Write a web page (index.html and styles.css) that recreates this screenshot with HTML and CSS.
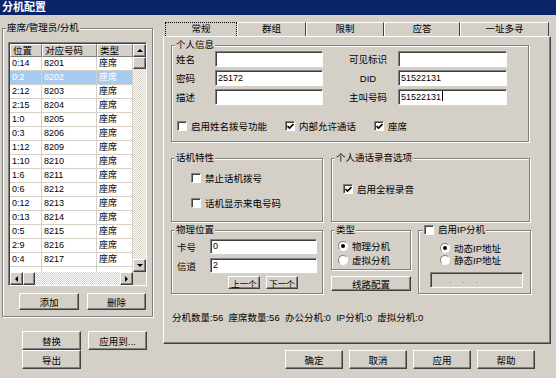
FILE: index.html
```html
<!DOCTYPE html>
<html>
  <head>
    <meta charset="utf-8">
    <link rel="stylesheet" href="styles.css">
    <title>分机配置</title>
  </head>
  <body>
    <div class="titlebar">分机配置</div>
    <div class="dialog">
      <div class="left-col">
        <div class="group seat-group">
          <span class="group-title">座席/管理员/分机</span>
          <div class="list">
            <div class="list-main">
              <div class="list-table">
                <div class="row head"><span>位置</span><span>对应号码</span><span>类型</span></div>
                <div class="row"><span>0:14</span><span>8201</span><span>座席</span></div>
                <div class="row selected"><span>0:2</span><span>8202</span><span>座席</span></div>
                <div class="row"><span>2:12</span><span>8203</span><span>座席</span></div>
                <div class="row"><span>2:15</span><span>8204</span><span>座席</span></div>
                <div class="row"><span>1:0</span><span>8205</span><span>座席</span></div>
                <div class="row"><span>0:3</span><span>8206</span><span>座席</span></div>
                <div class="row"><span>1:12</span><span>8209</span><span>座席</span></div>
                <div class="row"><span>1:10</span><span>8210</span><span>座席</span></div>
                <div class="row"><span>1:6</span><span>8211</span><span>座席</span></div>
                <div class="row"><span>0:6</span><span>8212</span><span>座席</span></div>
                <div class="row"><span>0:12</span><span>8213</span><span>座席</span></div>
                <div class="row"><span>0:13</span><span>8214</span><span>座席</span></div>
                <div class="row"><span>0:5</span><span>8215</span><span>座席</span></div>
                <div class="row"><span>2:9</span><span>8216</span><span>座席</span></div>
                <div class="row"><span>0:4</span><span>8217</span><span>座席</span></div>
                <div class="row"><span></span><span></span><span></span></div>
              </div>
              <div class="vscroll">
                <div class="sb-btn"><i class="arrow up"></i></div>
                <div class="sb-thumb"></div>
                <div class="sb-track"></div>
                <div class="sb-btn"><i class="arrow down"></i></div>
              </div>
            </div>
            <div class="hscroll">
              <div class="sb-btn"><i class="arrow left"></i></div>
              <div class="sb-thumb wide"></div>
              <div class="sb-track"></div>
              <div class="sb-btn"><i class="arrow right"></i></div>
              <div class="sb-corner"></div>
            </div>
          </div>
          <div class="seat-buttons">
            <button class="btn add-btn">添加</button>
            <button class="btn del-btn">删除</button>
          </div>
        </div>
        <div class="left-actions">
          <button class="btn">替换</button>
          <button class="btn">应用到...</button>
          <button class="btn">导出</button>
        </div>
      </div>

      <div class="right-col">
        <div class="tabs">
          <div class="tab active" style="width:72px">常规</div>
          <div class="tab" style="width:69px">群组</div>
          <div class="tab" style="width:78px">限制</div>
          <div class="tab" style="width:76px">应答</div>
          <div class="tab" style="width:89px">一址多寻</div>
        </div>
        <div class="panel">
          <div class="group info-group">
            <span class="group-title">个人信息</span>
            <div class="info-grid">
              <span>姓名</span><div class="field"></div>
              <span class="label-c">可见标识</span><div class="field"></div>
              <span>密码</span><div class="field">25172</div>
              <span class="label-c">DID</span><div class="field">51522131</div>
              <span>描述</span><div class="field"></div>
              <span class="label-c">主叫号码</span><div class="field">51522131<i class="caret"></i></div>
            </div>
            <div class="info-checks">
              <label class="check w1"><span class="check-box"></span>启用姓名拨号功能</label>
              <label class="check w2"><span class="check-box"><svg width="7" height="7" viewBox="0 0 7 7"><polyline points="0.5,3 2.5,5 6.5,1" fill="none" stroke="#000" stroke-width="1.6"/></svg></span>内部允许通话</label>
              <label class="check"><span class="check-box"><svg width="7" height="7" viewBox="0 0 7 7"><polyline points="0.5,3 2.5,5 6.5,1" fill="none" stroke="#000" stroke-width="1.6"/></svg></span>座席</label>
            </div>
          </div>

          <div class="row2">
            <div class="group phone-group">
              <span class="group-title">话机特性</span>
              <label class="check"><span class="check-box"></span>禁止话机拨号</label>
              <label class="check"><span class="check-box"></span>话机显示来电号码</label>
            </div>
            <div class="group rec-group">
              <span class="group-title">个人通话录音选项</span>
              <label class="check"><span class="check-box"><svg width="7" height="7" viewBox="0 0 7 7"><polyline points="0.5,3 2.5,5 6.5,1" fill="none" stroke="#000" stroke-width="1.6"/></svg></span>启用全程录音</label>
            </div>
          </div>

          <div class="row3">
            <div class="group pos-group">
              <span class="group-title">物理位置</span>
              <div class="pos-grid">
                <span>卡号</span><div class="field small">0</div>
                <span>信道</span><div class="field small">2</div>
              </div>
              <div class="pos-buttons">
                <button class="btn mini">上一个</button>
                <button class="btn mini">下一个</button>
              </div>
            </div>
            <div class="type-col">
              <div class="group type-group">
                <span class="group-title">类型</span>
                <label class="radio-item"><span class="radio on"></span>物理分机</label>
                <label class="radio-item"><span class="radio"></span>虚拟分机</label>
              </div>
              <button class="btn line-btn">线路配置</button>
            </div>
            <div class="group ip-group">
              <span class="group-title check-title"><span class="check-box"></span>启用IP分机</span>
              <label class="radio-item ip-radio"><span class="radio on"></span>动态IP地址</label>
              <label class="radio-item ip-radio"><span class="radio"></span>静态IP地址</label>
              <div class="ip-field">.&nbsp;&nbsp;&nbsp;&nbsp;.&nbsp;&nbsp;&nbsp;&nbsp;.</div>
            </div>
          </div>

          <div class="status">分机数量:56  座席数量:56  办公分机:0  IP分机:0  虚拟分机:0</div>
        </div>
        <div class="footer">
          <button class="btn foot-btn">确定</button>
          <button class="btn foot-btn">取消</button>
          <button class="btn foot-btn">应用</button>
          <button class="btn foot-btn">帮助</button>
        </div>
      </div>
    </div>
  </body>
</html>
```
FILE: styles.css
```css
body {
  margin: 0;
  width: 556px;
  height: 378px;
  overflow: hidden;
  background: #d4d0c8;
  font: 9.5px "Liberation Sans", "Noto Sans CJK SC", sans-serif;
  color: #000;
}

.titlebar {
  height: 15px;
  line-height: 15px;
  padding-left: 2px;
  background: #0a246a;
  color: #fff;
  font-weight: bold;
  font-size: 11px;
}

.dialog {
  display: flex;
  align-items: flex-start;
}

/* etched group box */
.group {
  position: relative;
  box-sizing: border-box;
  border: 1px solid #808080;
  box-shadow: inset 1px 1px 0 #fff, 1px 1px 0 #fff;
}

.group-title {
  position: absolute;
  top: -7px;
  left: 3px;
  padding: 0 1px;
  line-height: 12px;
  background: #d4d0c8;
  white-space: nowrap;
}

.btn {
  box-sizing: border-box;
  display: flex;
  align-items: center;
  justify-content: center;
  padding: 0;
  border: 1px solid;
  border-color: #fff #404040 #404040 #fff;
  box-shadow: inset -1px -1px 0 #808080;
  background: #d4d0c8;
  color: #000;
  font: inherit;
}

.field {
  box-sizing: border-box;
  height: 16px;
  padding: 0 2px;
  border: 1px solid;
  border-color: #808080 #fff #fff #808080;
  box-shadow: inset 1px 1px 0 #404040;
  background: #fff;
  font-size: 9px;
  line-height: 14px;
  white-space: nowrap;
}

.caret {
  display: inline-block;
  width: 1px;
  height: 10px;
  margin-left: 1px;
  vertical-align: -1px;
  background: #000;
}

.check {
  display: flex;
  align-items: center;
  gap: 4px;
  height: 10px;
  white-space: nowrap;
}

.check-box {
  box-sizing: border-box;
  flex: none;
  display: flex;
  align-items: center;
  justify-content: center;
  width: 10px;
  height: 10px;
  border: 1px solid;
  border-color: #808080 #fff #fff #808080;
  box-shadow: inset 1px 1px 0 #404040;
  background: #fff;
}

.radio-item {
  display: flex;
  align-items: center;
  gap: 4px;
  white-space: nowrap;
}

.radio {
  box-sizing: border-box;
  flex: none;
  display: flex;
  align-items: center;
  justify-content: center;
  width: 10px;
  height: 10px;
  border-radius: 50%;
  border: 1px solid;
  border-color: #808080 #fff #fff #808080;
  background: #fff;
}

.radio.on::after {
  content: "";
  width: 4px;
  height: 4px;
  border-radius: 50%;
  background: #000;
}

/* left column */
.left-col {
  margin-left: 2px;
  margin-top: 13px;
  width: 151px;
}

.seat-group {
  height: 289px;
  padding: 13px 0 0 5px;
}

.list {
  box-sizing: border-box;
  display: flex;
  flex-direction: column;
  width: 139px;
  height: 244px;
  padding: 1px 0 0 1px;
  border: 1px solid;
  border-color: #808080 #fff #fff #808080;
  background: #404040;
}

.list-main {
  display: flex;
  flex: 1;
  min-height: 0;
}

.list-table {
  flex: 1;
  overflow: hidden;
  background: #fff;
  font-size: 9px;
}

.row {
  display: grid;
  grid-template-columns: 32px 55px 36px;
  height: 14px;
}

.row span {
  box-sizing: border-box;
  padding-left: 2px;
  border-right: 1px solid #d4d0c8;
  border-bottom: 1px solid #d4d0c8;
  line-height: 13px;
  white-space: nowrap;
  overflow: hidden;
}

.row.head {
  height: 13px;
  font-size: 9.5px;
}

.row.head span {
  border: 1px solid;
  border-color: #fff #808080 #808080 #fff;
  background: #d4d0c8;
  line-height: 11px;
}

.row.selected span {
  background: #a6caf0;
  color: #fff;
}

.vscroll {
  display: flex;
  flex-direction: column;
  width: 13px;
}

.hscroll {
  display: flex;
  height: 13px;
}

.sb-btn, .sb-thumb {
  box-sizing: border-box;
  flex: none;
  display: flex;
  align-items: center;
  justify-content: center;
  width: 13px;
  height: 13px;
  border: 1px solid;
  border-color: #fff #404040 #404040 #fff;
  box-shadow: inset -1px -1px 0 #808080;
  background: #d4d0c8;
}

.sb-thumb {
  height: 12px;
}

.sb-thumb.wide {
  width: 12px;
  height: 13px;
}

.sb-track {
  flex: 1;
  background: repeating-conic-gradient(#fff 0 25%, #d4d0c8 0 50%) 0 0 / 2px 2px;
}

.sb-corner {
  width: 13px;
  background: #d4d0c8;
}

.arrow {
  width: 0;
  height: 0;
  border: 3px solid transparent;
}

.arrow.up { border-bottom-color: #000; border-top-width: 0; }
.arrow.down { border-top-color: #000; border-bottom-width: 0; }
.arrow.left { border-right-color: #000; border-left-width: 0; }
.arrow.right { border-left-color: #000; border-right-width: 0; }

.seat-buttons {
  display: flex;
  gap: 8px;
  margin: 7px 0 0 11px;
}

.add-btn {
  width: 60px;
  height: 17px;
}

.del-btn {
  width: 59px;
  height: 17px;
}

.left-actions {
  display: grid;
  grid-template-columns: 59px 59px;
  grid-auto-rows: 19px;
  column-gap: 7px;
  margin: 14px 0 0 20px;
}

/* right column */
.right-col {
  margin-left: 10px;
  margin-top: 7px;
  width: 388px;
}

.tabs {
  display: flex;
  height: 14px;
  padding-left: 2px;
}

.tab {
  box-sizing: border-box;
  height: 14px;
  border-top: 1px solid #fff;
  border-left: 1px solid #fff;
  border-right: 1px solid #404040;
  text-align: center;
  line-height: 12px;
}

.tab.active {
  border: 1px dotted #000;
  border-bottom: 0;
  box-shadow: 1px 0 0 #404040;
}

.panel {
  box-sizing: border-box;
  height: 308px;
  padding: 8px 0 0 7px;
  border: 1px solid;
  border-color: #fff #404040 #404040 #fff;
  box-shadow: inset -1px -1px 0 #808080;
}

.info-group {
  width: 358px;
  height: 97px;
  padding: 5px 0 0 4px;
}

.info-grid {
  display: grid;
  grid-template-columns: 39px 108px 75px 109px;
  grid-auto-rows: 16px;
  row-gap: 3px;
  align-items: center;
}

.label-c {
  padding-left: 15px;
  text-align: center;
}

.info-checks {
  display: flex;
  align-items: center;
  margin-top: 16px;
  padding-left: 1px;
}

.w1 { width: 108px; }
.w2 { width: 89px; }

.row2 {
  display: flex;
  gap: 8px;
  margin-top: 16px;
}

.phone-group {
  display: flex;
  flex-direction: column;
  gap: 15px;
  width: 152px;
  height: 64px;
  padding: 14px 0 0 19px;
}

.rec-group {
  width: 199px;
  height: 64px;
  padding: 25px 0 0 11px;
}

.row3 {
  display: flex;
  margin-top: 8px;
}

.pos-group {
  width: 152px;
  height: 64px;
  padding: 8px 0 0 5px;
}

.pos-grid {
  display: grid;
  grid-template-columns: 33px 107px;
  grid-auto-rows: 15px;
  row-gap: 4px;
  align-items: center;
}

.field.small {
  height: 15px;
  line-height: 13px;
}

.pos-buttons {
  display: flex;
  gap: 6px;
  margin: 3px 0 0 51px;
}

.btn.mini {
  width: 32px;
  height: 13px;
  font-size: 8.5px;
}

.type-col {
  display: flex;
  flex-direction: column;
  width: 80px;
  margin-left: 8px;
}

.type-group {
  height: 40px;
  padding: 8px 0 0 6px;
}

.type-group .radio-item {
  height: 14px;
}

.line-btn {
  width: 80px;
  height: 15px;
  margin-top: 6px;
}

.ip-group {
  width: 113px;
  height: 64px;
  margin-left: 7px;
  padding: 11px 0 0 21px;
}

.check-title {
  display: flex;
  align-items: center;
  gap: 4px;
  left: 4px;
}

.ip-radio {
  height: 12px;
}

.ip-field {
  box-sizing: border-box;
  width: 93px;
  height: 16px;
  margin: 6px 0 0 -10px;
  padding-left: 18px;
  border: 1px solid;
  border-color: #808080 #fff #fff #808080;
  box-shadow: inset 1px 1px 0 #404040;
  color: #808080;
  line-height: 13px;
}

.status {
  margin-top: 18px;
  padding-left: 1px;
  line-height: 12px;
  white-space: pre;
}

.footer {
  display: flex;
  gap: 6px;
  margin-top: 6px;
  padding-left: 122px;
}

.foot-btn {
  width: 58px;
  height: 19px;
}
```
